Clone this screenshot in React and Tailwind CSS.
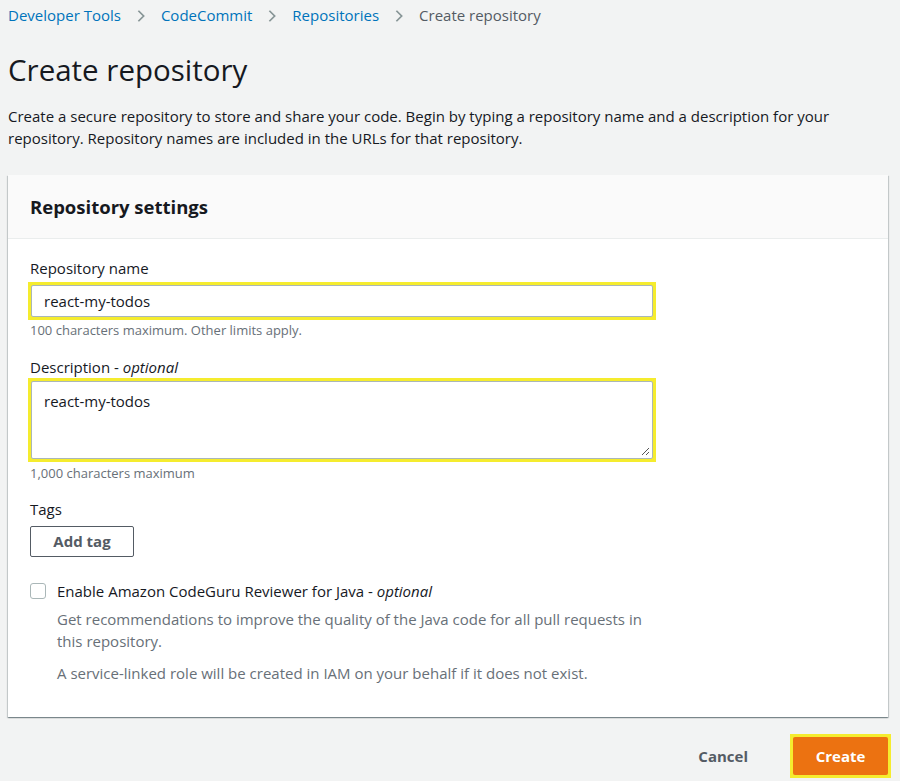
import React from 'react';

const Chevron = () => (
  <svg className="w-[14px] h-[14px] mx-[13px] text-[#879596]" viewBox="0 0 16 16" fill="none" stroke="currentColor">
    <path strokeWidth={2} d="M5 2l6 6-6 6" />
  </svg>
);

const App = () => {
  return (
    <div
      className="min-h-[781px] bg-[#f2f3f3] text-[#16191f] px-2 text-[15px]"
      style={{ fontFamily: '"Open Sans", Roboto, sans-serif' }}
    >
      <nav className="flex items-center h-[31px]">
        <a className="text-[#0073bb]">Developer Tools</a>
        <Chevron />
        <a className="text-[#0073bb]">CodeCommit</a>
        <Chevron />
        <a className="text-[#0073bb]">Repositories</a>
        <Chevron />
        <span className="text-[#545b64]">Create repository</span>
      </nav>

      <h1 className="text-[29.5px] leading-[36px] mt-[21px]">Create repository</h1>
      <p className="leading-[22px] mt-[17px] max-w-[830px]">
        Create a secure repository to store and share your code. Begin by typing a repository name and a description for your repository. Repository names are included in the URLs for that repository.
      </p>

      <div className="mt-[26px] w-[880px] bg-white shadow-[0_1px_1px_0_rgba(0,28,36,0.3),1px_1px_1px_0_rgba(0,28,36,0.15),-1px_1px_1px_0_rgba(0,28,36,0.15)]">
        <div className="bg-[#fafafa] border-b border-[#eaeded] h-[64px] flex items-center px-[22px]">
          <h2 className="text-[18.5px] font-bold">Repository settings</h2>
        </div>
        <div className="px-[20px] pt-[18px] pb-[33px]">
          <label className="block leading-[22px] px-[2px]">Repository name</label>
          <div className="mt-[3px] w-[628px] p-[3px] bg-[#f5ec2e]">
            <div className="h-[32px] bg-white border border-[#aab7b8] rounded-[2px] flex items-center px-[12px]">
              react-my-todos
            </div>
          </div>
          <p className="text-[13px] leading-[16px] text-[#687078] mt-[2px] px-[2px]">100 characters maximum. Other limits apply.</p>

          <label className="block leading-[22px] mt-[18px] px-[2px]">
            Description - <i>optional</i>
          </label>
          <div className="w-[628px] p-[3px] bg-[#f5ec2e]">
            <div className="relative h-[78px] bg-white border border-[#aab7b8] rounded-[2px] px-[12px] pt-[8px]">
              react-my-todos
              <svg className="absolute right-[2px] bottom-[2px] w-[9px] h-[9px] text-[#555]" viewBox="0 0 9 9" stroke="currentColor">
                <path d="M8 1L1 8M8 5L5 8" strokeWidth={1} />
              </svg>
            </div>
          </div>
          <p className="text-[13px] leading-[16px] text-[#687078] mt-[3px] px-[2px]">1,000 characters maximum</p>

          <label className="block leading-[22px] mt-[17px] px-[2px]">Tags</label>
          <button className="block mt-[6px] ml-[2px] h-[31px] w-[104px] border border-[#545b64] rounded-[2px] font-bold text-[#545b64]">
            Add tag
          </button>

          <div className="flex mt-[23px] px-[2px]">
            <div className="w-[16px] h-[16px] mt-[3px] border border-[#aab7b8] rounded-[3px] bg-white shrink-0" />
            <div className="ml-[11px] leading-[22px]">
              <div>Enable Amazon CodeGuru Reviewer for Java - <i>optional</i></div>
              <p className="text-[#687078] w-[600px] mt-[6px]">
                Get recommendations to improve the quality of the Java code for all pull requests in this repository.
              </p>
              <p className="text-[#687078] mt-[10px]">A service-linked role will be created in IAM on your behalf if it does not exist.</p>
            </div>
          </div>
        </div>
      </div>

      <div className="flex justify-end items-center mt-[17px] w-[883px]">
        <button className="font-bold text-[#545b64] mr-[42px]">Cancel</button>
        <div className="p-[3px] bg-[#f5ec2e]">
          <button className="block h-[38px] w-[95px] bg-[#ec7211] rounded-[2px] text-white font-bold">Create</button>
        </div>
      </div>
    </div>
  );
};

export default App;
